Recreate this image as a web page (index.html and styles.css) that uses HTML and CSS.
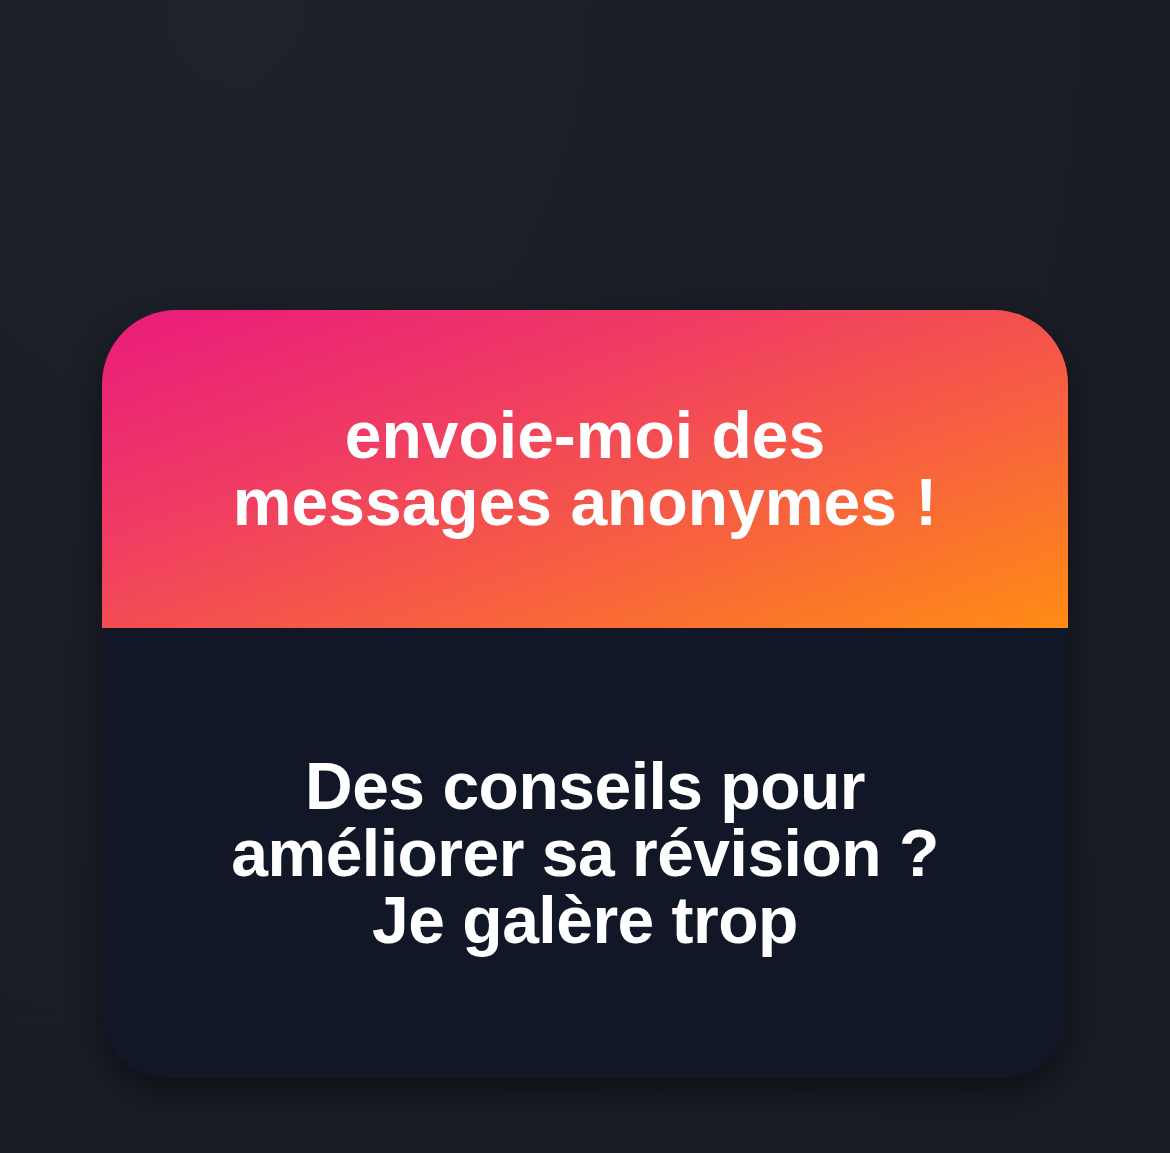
FILE: index.html
```html
<!DOCTYPE html>
<html lang="fr">
<head>
<meta charset="utf-8">
<title>Question</title>
<link rel="stylesheet" href="styles.css">
</head>
<body>
<main class="stage">
  <section class="card">
    <header class="card-head">
      <h1 class="prompt">envoie-moi des<br>messages anonymes !</h1>
    </header>
    <div class="card-body">
      <p class="answer">Des conseils pour<br>améliorer sa révision ?<br>Je galère trop</p>
    </div>
  </section>
</main>
</body>
</html>
```
FILE: styles.css
```css
html, body {
  margin: 0;
  padding: 0;
}
body {
  width: 1170px;
  height: 1153px;
  overflow: hidden;
  background: radial-gradient(ellipse at 20% 0%, #20222a 0%, #1b1e26 40%, #191c23 100%);
  font-family: "Liberation Sans", Arial, sans-serif;
}
.stage {
  display: flex;
  justify-content: center;
  padding-top: 310px;
}
.card {
  width: 966px;
  height: 768px;
  border-radius: 74px 74px 64px 64px;
  overflow: hidden;
  display: flex;
  flex-direction: column;
  background: #111726;
  box-shadow: 0 14px 30px rgba(10, 11, 16, 0.7);
}
.card-head {
  height: 318px;
  display: flex;
  align-items: center;
  justify-content: center;
  background: linear-gradient(160deg, #ea1a7c 0%, #f03d62 35%, #f76040 65%, #ff8c14 100%);
}
.prompt {
  margin: 0;
  color: #ffffff;
  font-family: "Liberation Sans", Arial, sans-serif;
  font-weight: 700;
  font-size: 66px;
  line-height: 67px;
  letter-spacing: 0;
  text-align: center;
}
.card-body {
  flex: 1;
  display: flex;
  align-items: center;
  justify-content: center;
}
.answer {
  margin: 0;
  color: #ffffff;
  font-family: "Liberation Sans", Arial, sans-serif;
  font-weight: 700;
  font-size: 66px;
  line-height: 67px;
  letter-spacing: -0.5px;
  text-align: center;
}
```
